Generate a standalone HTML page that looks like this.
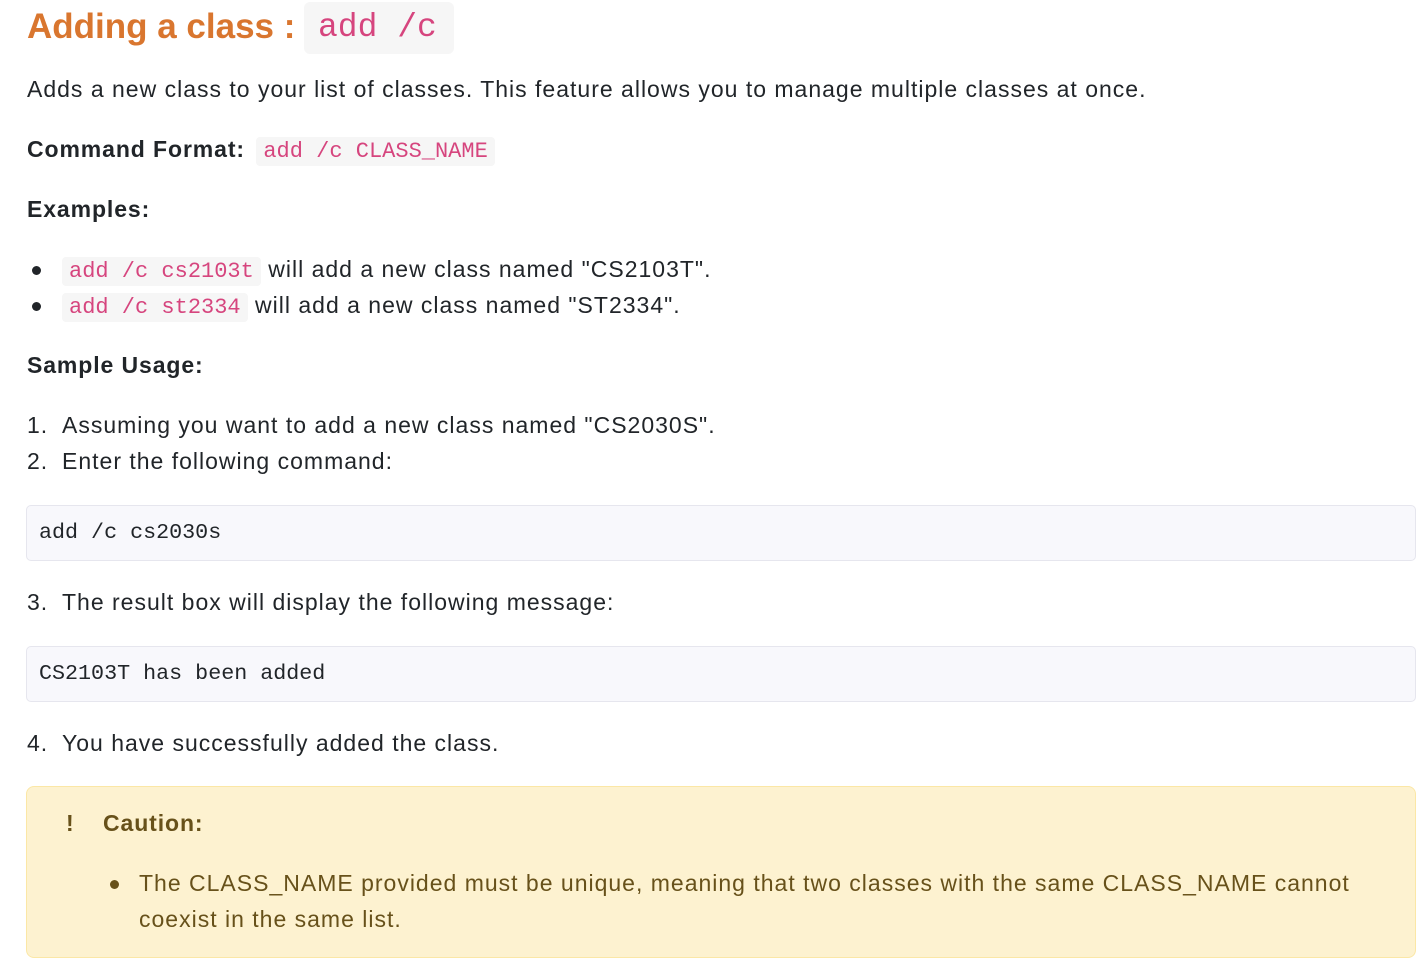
<!DOCTYPE html>
<html><head><meta charset="utf-8"><style>
body{margin:0;width:1426px;height:970px;background:#fff;font-family:"Liberation Sans",sans-serif;color:#212529;position:relative;overflow:hidden}
.a{position:absolute;white-space:nowrap;font-size:23px;line-height:30px;letter-spacing:1px}
code{font-family:"Liberation Mono","DejaVu Sans Mono",monospace;color:#d6457e;background:#f6f6f6;border-radius:4px;padding:2px 7px;font-size:22px;letter-spacing:0}
b{font-weight:bold;letter-spacing:0.9px}
.dot{position:absolute;width:9px;height:9px;border-radius:50%;background:#212529}
.pre{position:absolute;left:26px;width:1390px;background:#f8f8fc;border:1px solid #e6e6ee;border-radius:5px;font-family:"Liberation Mono","DejaVu Sans Mono",monospace;font-size:21.7px;color:#212529;box-sizing:border-box;padding-left:12px}
</style></head><body>
<div class="a" style="left:27px;top:4px;line-height:46px;font-size:35px;letter-spacing:0;font-weight:bold;color:#d9762f">Adding a class :</div>
<div style="position:absolute;left:304px;top:2px;width:150px;height:52px;background:#f6f6f6;border-radius:6px"></div>
<div class="a" style="left:318px;top:5px;line-height:46px;font-size:33px;letter-spacing:0;color:#d6457e;font-family:'Liberation Mono',monospace">add /c</div>

<div class="a" style="left:27px;top:74px">Adds a new class to your list of classes. This feature allows you to manage multiple classes at once.</div>
<div class="a" style="left:27px;top:134px"><b>Command Format:</b> <code style="margin-left:4px">add /c CLASS_NAME</code></div>
<div class="a" style="left:27px;top:194px"><b>Examples:</b></div>
<div class="dot" style="left:32px;top:266px"></div>
<div class="a" style="left:62px;top:254px"><code>add /c cs2103t</code> will add a new class named "CS2103T".</div>
<div class="dot" style="left:32px;top:302px"></div>
<div class="a" style="left:62px;top:290px"><code>add /c st2334</code> will add a new class named "ST2334".</div>
<div class="a" style="left:27px;top:350px"><b>Sample Usage:</b></div>
<div class="a" style="left:27px;top:410px">1.</div><div class="a" style="left:62px;top:410px">Assuming you want to add a new class named "CS2030S".</div>
<div class="a" style="left:27px;top:446px">2.</div><div class="a" style="left:62px;top:446px">Enter the following command:</div>
<div class="pre" style="top:505px;height:56px;line-height:54px">add /c cs2030s</div>
<div class="a" style="left:27px;top:587px">3.</div><div class="a" style="left:62px;top:587px">The result box will display the following message:</div>
<div class="pre" style="top:646px;height:56px;line-height:54px">CS2103T has been added</div>
<div class="a" style="left:27px;top:728px">4.</div><div class="a" style="left:62px;top:728px">You have successfully added the class.</div>

<div style="position:absolute;left:26px;top:786px;width:1390px;height:172px;background:#fdf2d0;border:1px solid #fbe7a6;border-radius:8px;box-sizing:border-box"></div>
<div class="a" style="left:66px;top:808px;color:#67511a;font-weight:bold">!</div>
<div class="a" style="left:103px;top:808px;color:#67511a"><b>Caution:</b></div>
<div class="dot" style="left:110px;top:880px;background:#67511a"></div>
<div class="a" style="left:139px;top:868px;color:#67511a">The CLASS_NAME provided must be unique, meaning that two classes with the same CLASS_NAME cannot</div>
<div class="a" style="left:139px;top:904px;color:#67511a">coexist in the same list.</div>
</body></html>
